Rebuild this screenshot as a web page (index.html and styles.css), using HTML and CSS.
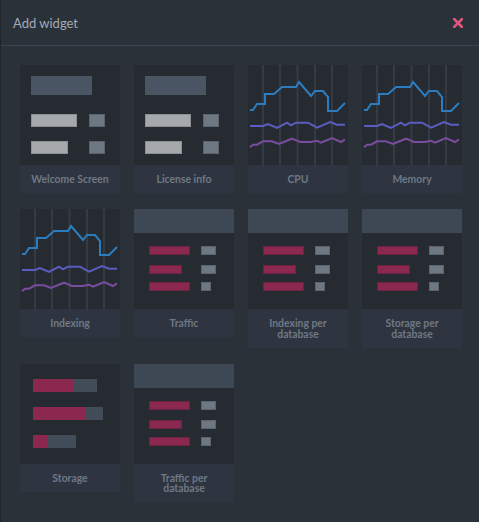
FILE: index.html
```html
<!DOCTYPE html>
<html>
<head>
<meta charset="utf-8">
<link rel="stylesheet" href="styles.css">
</head>
<body>
<div class="dialog">
  <header class="head">
    <h1 class="title">Add widget</h1>
    <button class="close" aria-label="Close">
      <svg width="10" height="10" viewBox="0 0 10 10"><path d="M1 1L9 9M9 1L1 9" stroke="#e2577c" stroke-width="2.6" stroke-linecap="square"/></svg>
    </button>
  </header>
  <div class="grid">
    <div class="card">
      <div class="preview">
        <svg width="100" height="100" viewBox="0 0 100 100">
          <rect x="11" y="11" width="61" height="19" fill="#4a5563"/>
          <rect x="11.5" y="49.5" width="45" height="12" class="light"/>
          <rect x="69.5" y="49.5" width="15" height="12" class="sq"/>
          <rect x="11.5" y="76.5" width="36" height="12" class="light"/>
          <rect x="69.5" y="76.5" width="15" height="12" class="sq"/>
        </svg>
      </div>
      <div class="label">Welcome Screen</div>
    </div>
    <div class="card">
      <div class="preview">
        <svg width="100" height="100" viewBox="0 0 100 100">
          <rect x="11" y="11" width="61" height="19" fill="#4a5563"/>
          <rect x="11.5" y="49.5" width="45" height="12" class="light"/>
          <rect x="69.5" y="49.5" width="15" height="12" class="sq"/>
          <rect x="11.5" y="76.5" width="36" height="12" class="light"/>
          <rect x="69.5" y="76.5" width="15" height="12" class="sq"/>
        </svg>
      </div>
      <div class="label">License info</div>
    </div>
    <div class="card">
      <div class="preview">
        <svg width="100" height="100" viewBox="0 0 100 100">
          <g class="gridlines"><path d="M15 0V100M32 0V100M49.5 0V100M67 0V100M84 0V100"/></g>
          <polyline class="blue" points="2,45 5,45 9,39 17,39 17,29 26,29 34,22 48,22 51,17 63,31 67,26 75,26 80,32 80,46 89,46 97,38"/>
          <polyline class="indigo" points="2,61 15,61 20,59 29,63 39,57.7 43,60.3 48,57.7 60,57.7 69,62.7 82,57 89,59.7 97,59.7"/>
          <polyline class="purple" points="2,82.3 5,79.7 9,79.7 15,76.3 24,76.3 31,79 44,73.7 52,77 63,77 69,75.7 73,77.7 84,73 93,77 97,74.3"/>
        </svg>
      </div>
      <div class="label">CPU</div>
    </div>
    <div class="card">
      <div class="preview">
        <svg width="100" height="100" viewBox="0 0 100 100">
          <g class="gridlines"><path d="M15 0V100M32 0V100M49.5 0V100M67 0V100M84 0V100"/></g>
          <polyline class="blue" points="2,45 5,45 9,39 17,39 17,29 26,29 34,22 48,22 51,17 63,31 67,26 75,26 80,32 80,46 89,46 97,38"/>
          <polyline class="indigo" points="2,61 15,61 20,59 29,63 39,57.7 43,60.3 48,57.7 60,57.7 69,62.7 82,57 89,59.7 97,59.7"/>
          <polyline class="purple" points="2,82.3 5,79.7 9,79.7 15,76.3 24,76.3 31,79 44,73.7 52,77 63,77 69,75.7 73,77.7 84,73 93,77 97,74.3"/>
        </svg>
      </div>
      <div class="label">Memory</div>
    </div>

    <div class="card">
      <div class="preview">
        <svg width="100" height="100" viewBox="0 0 100 100">
          <g class="gridlines"><path d="M15 0V100M32 0V100M49.5 0V100M67 0V100M84 0V100"/></g>
          <polyline class="blue" points="2,45 5,45 9,39 17,39 17,29 26,29 34,22 48,22 51,17 63,31 67,26 75,26 80,32 80,46 89,46 97,38"/>
          <polyline class="indigo" points="2,61 15,61 20,59 29,63 39,57.7 43,60.3 48,57.7 60,57.7 69,62.7 82,57 89,59.7 97,59.7"/>
          <polyline class="purple" points="2,82.3 5,79.7 9,79.7 15,76.3 24,76.3 31,79 44,73.7 52,77 63,77 69,75.7 73,77.7 84,73 93,77 97,74.3"/>
        </svg>
      </div>
      <div class="label">Indexing</div>
    </div>
    <div class="card">
      <div class="preview">
        <svg width="100" height="100" viewBox="0 0 100 100">
          <rect x="0" y="0" width="100" height="24" fill="#3e4754"/>
          <rect x="15.5" y="37.5" width="40" height="8" class="red"/>
          <rect x="67.5" y="37.5" width="14" height="8" class="sq"/>
          <rect x="15.5" y="56.5" width="32" height="8" class="red"/>
          <rect x="67.5" y="56.5" width="14" height="8" class="sq"/>
          <rect x="15.5" y="73.5" width="40" height="8" class="red"/>
          <rect x="67.5" y="73.5" width="9" height="8" class="sq"/>
        </svg>
      </div>
      <div class="label">Traffic</div>
    </div>
    <div class="card">
      <div class="preview">
        <svg width="100" height="100" viewBox="0 0 100 100">
          <rect x="0" y="0" width="100" height="24" fill="#3e4754"/>
          <rect x="15.5" y="37.5" width="40" height="8" class="red"/>
          <rect x="67.5" y="37.5" width="14" height="8" class="sq"/>
          <rect x="15.5" y="56.5" width="32" height="8" class="red"/>
          <rect x="67.5" y="56.5" width="14" height="8" class="sq"/>
          <rect x="15.5" y="73.5" width="40" height="8" class="red"/>
          <rect x="67.5" y="73.5" width="9" height="8" class="sq"/>
        </svg>
      </div>
      <div class="label">Indexing per<br>database</div>
    </div>
    <div class="card">
      <div class="preview">
        <svg width="100" height="100" viewBox="0 0 100 100">
          <rect x="0" y="0" width="100" height="24" fill="#3e4754"/>
          <rect x="15.5" y="37.5" width="40" height="8" class="red"/>
          <rect x="67.5" y="37.5" width="14" height="8" class="sq"/>
          <rect x="15.5" y="56.5" width="32" height="8" class="red"/>
          <rect x="67.5" y="56.5" width="14" height="8" class="sq"/>
          <rect x="15.5" y="73.5" width="40" height="8" class="red"/>
          <rect x="67.5" y="73.5" width="9" height="8" class="sq"/>
        </svg>
      </div>
      <div class="label">Storage per<br>database</div>
    </div>

    <div class="card">
      <div class="preview">
        <svg width="100" height="100" viewBox="0 0 100 100">
          <rect x="13" y="15" width="40" height="13" fill="#8a2850"/>
          <rect x="53" y="15" width="24" height="13" fill="#434c59"/>
          <rect x="13" y="43" width="53" height="13" fill="#8a2850"/>
          <rect x="66" y="43" width="17" height="13" fill="#434c59"/>
          <rect x="13" y="71" width="14" height="13" fill="#8a2850"/>
          <rect x="27" y="71" width="29" height="13" fill="#434c59"/>
        </svg>
      </div>
      <div class="label">Storage</div>
    </div>
    <div class="card">
      <div class="preview">
        <svg width="100" height="100" viewBox="0 0 100 100">
          <rect x="0" y="0" width="100" height="24" fill="#3e4754"/>
          <rect x="15.5" y="37.5" width="40" height="8" class="red"/>
          <rect x="67.5" y="37.5" width="14" height="8" class="sq"/>
          <rect x="15.5" y="56.5" width="32" height="8" class="red"/>
          <rect x="67.5" y="56.5" width="14" height="8" class="sq"/>
          <rect x="15.5" y="73.5" width="40" height="8" class="red"/>
          <rect x="67.5" y="73.5" width="9" height="8" class="sq"/>
        </svg>
      </div>
      <div class="label">Traffic per<br>database</div>
    </div>
  </div>
</div>
</body>
</html>
```

FILE: styles.css
```css
html, body {
  margin: 0;
  padding: 0;
  background: #2a3139;
  height: 100%;
}

.dialog {
  min-height: 522px;
  box-sizing: border-box;
  border-left: 1px solid #1f252b;
  font-family: Lato, "Open Sans", sans-serif;
}

.head {
  height: 45px;
  border-bottom: 1px solid #3a4551;
  display: flex;
  align-items: center;
  justify-content: space-between;
  padding: 0 16px 0 12px;
}

.title {
  margin: 0;
  font: 400 13px Lato, sans-serif;
  color: #a3abb6;
}

.close {
  border: 0;
  padding: 0;
  background: none;
  width: 10px;
  height: 10px;
  display: flex;
}

.grid {
  display: grid;
  grid-template-columns: repeat(4, 100px);
  column-gap: 14px;
  row-gap: 16px;
  padding: 19px 0 0 19px;
  align-items: start;
}

.card {
  display: flex;
  flex-direction: column;
}

.preview {
  height: 100px;
  background: #262b32;
}

.preview svg {
  display: block;
}

.label {
  background: #2e3540;
  padding: 9px 4px 8.5px;
  font: 700 10.4px/10.5px Lato, sans-serif;
  color: #6f7885;
  text-align: center;
}

.light {
  fill: #a5a9ac;
  stroke: #8c9093;
  stroke-width: 1;
}

.sq {
  fill: #6e7883;
  stroke: #5a636e;
  stroke-width: 1;
}

.red {
  fill: #8a2850;
  stroke: #6e2241;
  stroke-width: 1;
}

.gridlines path {
  stroke: #343b45;
  stroke-width: 2;
  fill: none;
}

.blue, .indigo, .purple {
  fill: none;
  stroke-width: 2;
  stroke-linejoin: miter;
}

.blue { stroke: #2c7dbf; }
.indigo { stroke: #5a5cbf; }
.purple { stroke: #7a4c9e; }
```
